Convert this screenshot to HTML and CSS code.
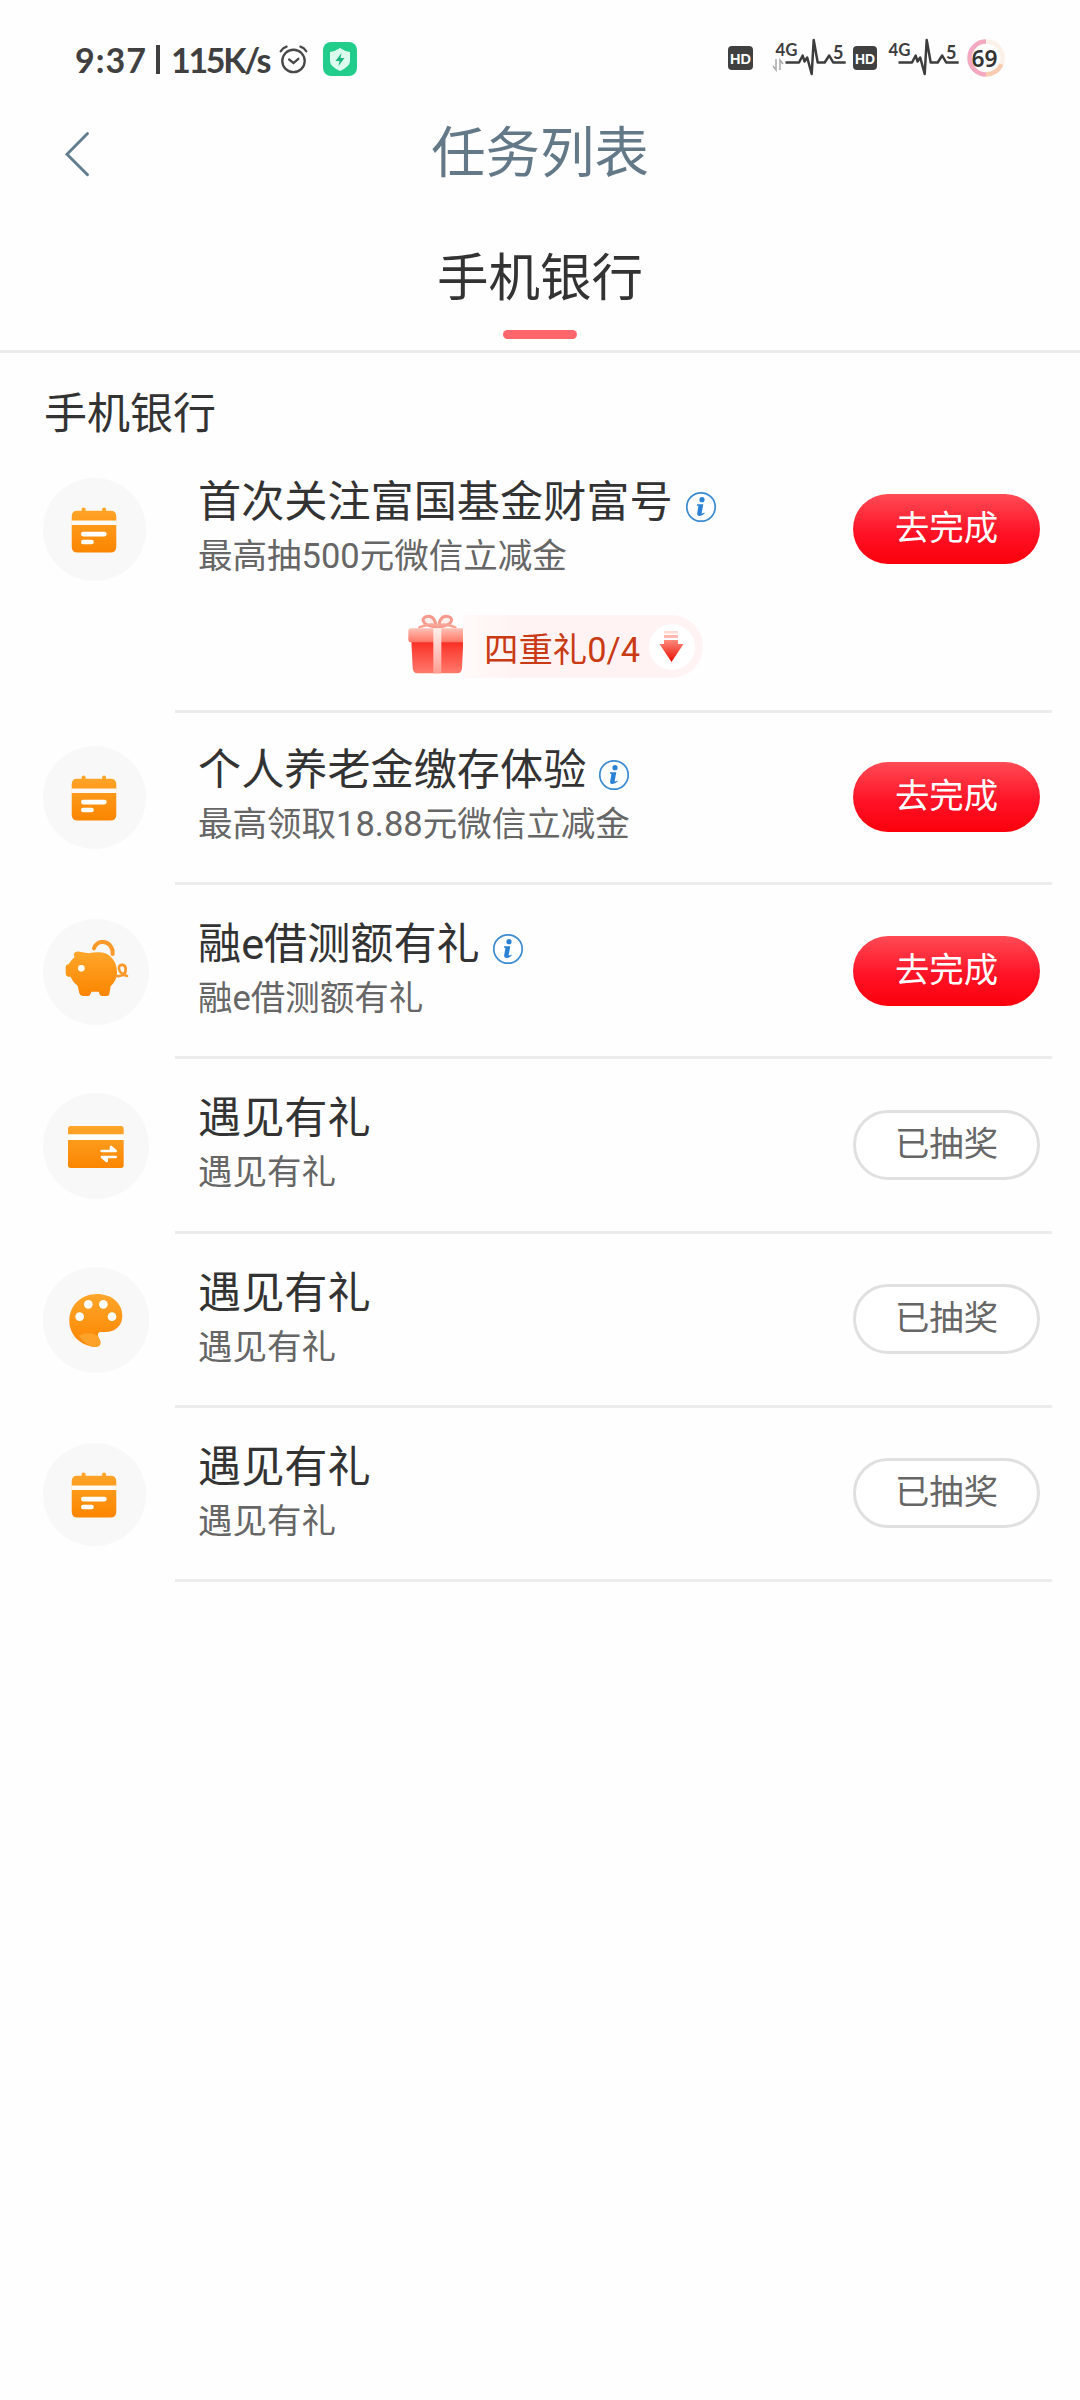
FILE: index.html
```html
<!DOCTYPE html>
<html lang="zh-CN">
<head>
<meta charset="utf-8">
<title>任务列表</title>
<link rel="stylesheet" href="styles.css">
</head>
<body>
<svg class="defs" width="0" height="0" aria-hidden="true">
  <defs>
    <linearGradient id="orange" x1="0" y1="0" x2="0" y2="1"><stop offset="0" stop-color="#ffa62b"/><stop offset="1" stop-color="#fb8500"/></linearGradient>
    <linearGradient id="box" x1="0" y1="0" x2="0" y2="1"><stop offset="0" stop-color="#fa2c22"/><stop offset="1" stop-color="#ff7a6c"/></linearGradient>
    <linearGradient id="lid" x1="0" y1="0" x2="0" y2="1"><stop offset="0" stop-color="#ffc0b5"/><stop offset="1" stop-color="#ff7565"/></linearGradient>
    <linearGradient id="ribbon" x1="0" y1="0" x2="0" y2="1"><stop offset="0" stop-color="#fff0ec"/><stop offset="1" stop-color="#ff9d92"/></linearGradient>
    <linearGradient id="arrow" x1="0" y1="0" x2="0" y2="1"><stop offset="0" stop-color="#ff8a7c"/><stop offset="1" stop-color="#e60d00"/></linearGradient>
  </defs>
  <symbol id="i-calendar" viewBox="69 291 312 312">
    <path fill="url(#orange)" d="M172 390h14v-4a6 6 0 0 1 12 0v4h50v-4a6 6 0 0 1 12 0v4h14q17 0 17 17v92q0 18-18 18h-99q-18 0-18-18v-92q0-17 16-17z"/>
    <path fill="#fffaf3" d="M155 420h137v13H155z"/>
    <rect x="184" y="454" width="78" height="14" rx="7" fill="#fff"/>
    <rect x="184" y="478" width="39" height="14" rx="7" fill="#fff"/>
  </symbol>
  <symbol id="i-pig" viewBox="69 570 318 318">
    <path fill="url(#orange)" d="M164 684c-7-11 3-18 15-16l27 5c11-3 22-4 34-3 31 2 51 27 51 60 0 17-7 30-19 42l-4 24q-1 5-8 5h-13q-7 0-9-7l-1-6h-23l-2 6q-2 7-8 7h-16q-8 0-10-8l-5-23c-10-8-17-16-21-27h-7q-8-2-8-12v-16q0-9 9-9c4-8 9-14 18-22z"/>
    <path fill="none" stroke="#fb9a2a" stroke-width="12" stroke-linecap="round" d="M222 658c8-22 35-25 48-9q9 10 8 26"/>
    <path fill="none" stroke="#fb9a2a" stroke-width="8" stroke-linecap="round" d="M290 741c18 2 29-8 27-23-1-13-18-14-20-3-2 11 8 23 24 26"/>
    <circle cx="184" cy="718" r="10" fill="#fff"/>
  </symbol>
  <symbol id="i-card" viewBox="69 69 318 318">
    <rect x="144" y="168" width="167" height="126" rx="8" fill="url(#orange)"/>
    <path fill="#fffdf8" d="M143 193h169v17H143z"/>
    <path fill="none" stroke="#fff" stroke-width="8" stroke-linecap="round" stroke-linejoin="round" d="M245 243h42l-14-12v12M287 261h-41l14 12v-12"/>
  </symbol>
  <symbol id="i-palette" viewBox="69 591 318 318">
    <path fill="url(#orange)" d="M231 672c44 0 76 28 76 65 0 31-23 49-51 49h-14c-9 1-10 9-5 18l4 10c2 11-4 18-16 17-44-5-77-36-77-79 0-47 37-80 83-80z"/>
    <path fill="#ffb340" opacity=".6" d="M176 797q30-14 58 0l7 17c2 11-4 18-16 17q-29-3-49-34z"/>
    <g fill="#fff"><circle cx="179" cy="740" r="13"/><circle cx="205" cy="703" r="13"/><circle cx="250" cy="703" r="13"/><circle cx="276" cy="740" r="13"/></g>
  </symbol>
  <symbol id="i-info" viewBox="0 0 32 32">
    <circle cx="16" cy="16" r="14.2" fill="#fff" stroke="#3b8bd0" stroke-width="1.7"/>
    <circle cx="17" cy="8.7" r="2.6" fill="#2b82d4"/>
    <path fill="#2b82d4" d="M12 13.2h6.3l-1.7 9.2q1.4.2 2.7-1l.5.8q-2.5 3-5.7 2.8-2.4-.3-1.9-2.7l1.2-7.2-1.5-.7z"/>
  </symbol>
</svg>

<header class="status">
  <div class="status-left">
    <span class="clock">9:37</span><span class="bar"></span><span class="speed">115K/s</span>
    <svg class="alarm" viewBox="0 0 30 30" fill="none" stroke="#484848" stroke-width="2.4" stroke-linecap="round">
      <circle cx="15" cy="16.5" r="11.6"/><path d="M10.500 15l4.500 3.700 5-4.400M1.800 6.500q2-3.500 6-4.800M28.200 6.500q-2-3.500-6-4.800"/>
    </svg>
    <svg class="shield" viewBox="0 0 34 34">
      <rect width="34" height="34" rx="8" fill="#22cd8b"/>
      <path fill="#dcfbee" d="M17 6q5 3.500 10 4v9q0 5.500-10 10-10-4.500-10-10v-9q5-.5 10-4z"/>
      <path fill="#18b67b" d="M18.500 11l-6 8h4l-1 5 6-8h-4z"/>
    </svg>
  </div>
  <svg class="status-right" viewBox="0 0 250 50">
    <g fill="#404040"><rect x="8" y="17" width="25" height="24" rx="4"/><rect x="133" y="17" width="24" height="24" rx="4"/></g>
    <g class="hd"><text x="10" y="35" textLength="21" lengthAdjust="spacingAndGlyphs">HD</text><text x="135" y="35" textLength="20" lengthAdjust="spacingAndGlyphs">HD</text></g>
    <g class="net"><text x="55.500" y="26.500" textLength="22" lengthAdjust="spacingAndGlyphs">4G</text><text x="113" y="30" class="five">5</text><text x="168.500" y="26.500" textLength="22" lengthAdjust="spacingAndGlyphs">4G</text><text x="226" y="30" class="five">5</text></g>
    <g fill="none" stroke="#3d3d3d" stroke-width="2.500" stroke-linejoin="round">
      <path d="M65.500 33.500h13.500l3.700-7 1.800 6 2.700-4 4.500 16.500 2-34 4 22.500h7l4.500-7 4 7h12.500"/>
      <path d="M178.500 33.500h13.500l3.700-7 1.800 6 2.700-4 4.500 16.500 2-34 4 22.500h7l4.500-7 4 7h12.500"/>
    </g>
    <path fill="none" stroke="#aaa" stroke-width="1.500" d="M56 30v11l-3-4M60 41V31l3 4"/>
  </svg>
  <svg class="battery" viewBox="0 0 40 40">
    <g fill="none" stroke-width="4.500"><path stroke="#f4a9c1" d="M20 36.500A16.500 16.500 0 0 1 20 3.500"/><path stroke="#f6cdb0" d="M20 36.500A16.500 16.500 0 0 0 35.500 26"/><path stroke="#fcf1e9" d="M20 3.500A16.500 16.500 0 0 1 35.500 26"/></g>
    <text x="18.500" y="29" text-anchor="middle" textLength="26" lengthAdjust="spacingAndGlyphs">69</text>
  </svg>
</header>

<nav class="navbar">
  <svg class="back" viewBox="0 0 26 46"><path d="M23.500 2.500L3 23.200l20.500 20.500" fill="none" stroke="#627d8d" stroke-width="2.900" stroke-linecap="round"/></svg>
  <h1>任务列表</h1>
</nav>
<div class="tabs"><div class="tab">手机银行</div></div>

<main>
  <h2>手机银行</h2>
  <section class="task first">
    <div class="line">
      <svg class="icon small"><use href="#i-calendar"/></svg>
      <div class="text"><h3>首次关注富国基金财富号<svg class="info"><use href="#i-info"/></svg></h3><p>最高抽500元微信立减金</p></div>
      <button class="btn go">去完成</button>
    </div>
    <div class="gift">
      <svg class="gift-box" viewBox="75 450 195 195">
        <g fill="#fff0ed" stroke="#f59a8d" stroke-width="9"><path d="M168 498c-50-6-45-32-22-32 14 0 22 16 22 32z"/><path d="M176 498c50-6 45-32 22-32-14 0-22 16-22 32z"/></g>
        <path fill="none" stroke="#f8a598" stroke-width="8" stroke-linecap="round" d="M168 492q-28-4-50 7M176 492q28-4 50 7"/>
        <path fill="url(#box)" d="M94 538h156l-4 84q-1 15-14 15H112q-13 0-14-15z"/>
        <rect x="85" y="502" width="172" height="42" rx="7" fill="url(#lid)"/>
        <path fill="url(#ribbon)" d="M160 502h24v135h-24z"/>
      </svg>
      <div class="pill"><span>四重礼0/4</span>
        <svg class="down" viewBox="0 0 46 46"><circle cx="23" cy="23" r="23" fill="#fff"/><path fill="#ffd9d4" d="M15 7h14v2.500H15z"/><path fill="#ffb8af" d="M15 11h14v3H15z"/><path fill="url(#arrow)" d="M15 16h14v4h5.500L22.500 38 10.500 20H15z"/></svg>
      </div>
    </div>
  </section>
  <section class="task second"><div class="line">
    <svg class="icon small"><use href="#i-calendar"/></svg>
    <div class="text"><h3>个人养老金缴存体验<svg class="info"><use href="#i-info"/></svg></h3><p>最高领取18.88元微信立减金</p></div>
    <button class="btn go">去完成</button></div></section>
  <section class="task"><div class="line">
    <svg class="icon"><use href="#i-pig"/></svg>
    <div class="text"><h3>融e借测额有礼<svg class="info"><use href="#i-info"/></svg></h3><p>融e借测额有礼</p></div>
    <button class="btn go">去完成</button></div></section>
  <section class="task"><div class="line">
    <svg class="icon"><use href="#i-card"/></svg>
    <div class="text"><h3>遇见有礼</h3><p>遇见有礼</p></div>
    <button class="btn done">已抽奖</button></div></section>
  <section class="task"><div class="line">
    <svg class="icon"><use href="#i-palette"/></svg>
    <div class="text"><h3>遇见有礼</h3><p>遇见有礼</p></div>
    <button class="btn done">已抽奖</button></div></section>
  <section class="task"><div class="line">
    <svg class="icon small"><use href="#i-calendar"/></svg>
    <div class="text"><h3>遇见有礼</h3><p>遇见有礼</p></div>
    <button class="btn done">已抽奖</button></div></section>
</main>
</body>
</html>
```
FILE: styles.css
```css
* { box-sizing: border-box; margin: 0; padding: 0; }
body { width: 1080px; min-height: 2400px; background: #fefefe; color: #333; font-family: Roboto, "Noto Sans CJK SC", sans-serif; }
h1, h2, h3 { font-weight: 400; }
.defs { display: block; height: 0; }

.status { display: flex; height: 106px; padding: 0 74px 0 75px; align-items: flex-start; font-family: Lato, sans-serif; }
.status-left { display: flex; align-items: center; height: 118px; color: #404040; font-size: 34px; font-weight: 700; }
.clock { width: 81px; letter-spacing: 1px; }
.bar { width: 4px; height: 29px; margin-right: 11px; background: #404040; }
.speed { width: 108px; letter-spacing: -2.300px; }
.alarm { width: 29px; height: 29px; }
.shield { width: 34px; height: 34px; margin-left: 15px; }
.status-right { width: 250px; height: 50px; margin: 29px -4px 0 auto; }
.hd text { fill: #fff; font: 700 15px "Liberation Sans", sans-serif; }
.net text { fill: #3d3d3d; font: 700 16.500px Lato, sans-serif; }
.net .five { font-size: 18px; }
.battery { width: 40px; height: 40px; margin-top: 38px; }
.battery text { fill: #333; font: 600 24px "Noto Sans", sans-serif; }

.navbar { display: grid; grid-template-columns: 65px 1fr 65px; align-items: center; height: 94px; padding: 0 64px; }
.back { width: 26px; height: 46px; margin-top: 2px; }
.navbar h1 { padding-top: 1px; color: #647987; font-size: 54.4px; line-height: 80px; text-align: center; }
.tabs { display: flex; justify-content: center; height: 153px; padding-top: 41px; border-bottom: 3px solid #ececec; }
.tab { display: flex; flex-direction: column; align-items: center; font-size: 51.5px; line-height: 76px; }
.tab::after { content: ""; width: 74px; height: 9px; margin-top: 13px; border-radius: 5px; background: #ff666b; }

h2 { height: 90px; padding: 33px 0 0 44px; font-size: 43px; line-height: 57px; }
.task { position: relative; height: 174.300px; }
.task::after { content: ""; position: absolute; left: 175px; right: 28px; bottom: 0; height: 3px; background: #ececec; }
.line { display: grid; grid-template-columns: 155px 1fr 187px; align-items: center; height: 171px; padding: 0 40px 0 43px; }
.icon { width: 106px; height: 106px; margin-top: 2px; border-radius: 50%; background: #f8f8f8; }
.icon.small { width: 103px; height: 103px; }
.text { padding-bottom: 4px; }
.text h3 { display: flex; align-items: center; font-size: 43.150px; line-height: 60px; white-space: nowrap; }
.text p { margin-top: -1px; color: #666; font-size: 34.500px; line-height: 48px; }
.info { width: 32px; height: 32px; margin: 7px 0 0 12px; }
.btn { height: 70px; border: 0; border-radius: 35px; font-family: inherit; font-size: 34.400px; line-height: 68px; padding-bottom: 2px; }
.go { background: linear-gradient(#ff4b55, #ff1326 55%, #fb000c); color: #fff; }
.done { border: 3px solid #e0e0e0; background: #fff; color: #666; line-height: 62px; padding-bottom: 2px; }
.first { height: 270px; }
.gift { display: flex; align-items: center; margin: 1px 0 0 405px; height: 63px; }
.gift-box { width: 65px; height: 65px; flex: none; margin-top: -6px; }
.pill { display: flex; align-items: center; width: 240px; height: 63px; margin-left: -7px; padding-left: 21px; border-radius: 0 32px 32px 0; background: linear-gradient(90deg, #fffaf9 0, #fff4f3 20%); color: #c93a15; font-size: 34.400px; }
.down { width: 46px; height: 46px; margin-left: auto; margin-right: 8px; }
.second { height: 172px; }
.second .line { height: 167px; }
```
